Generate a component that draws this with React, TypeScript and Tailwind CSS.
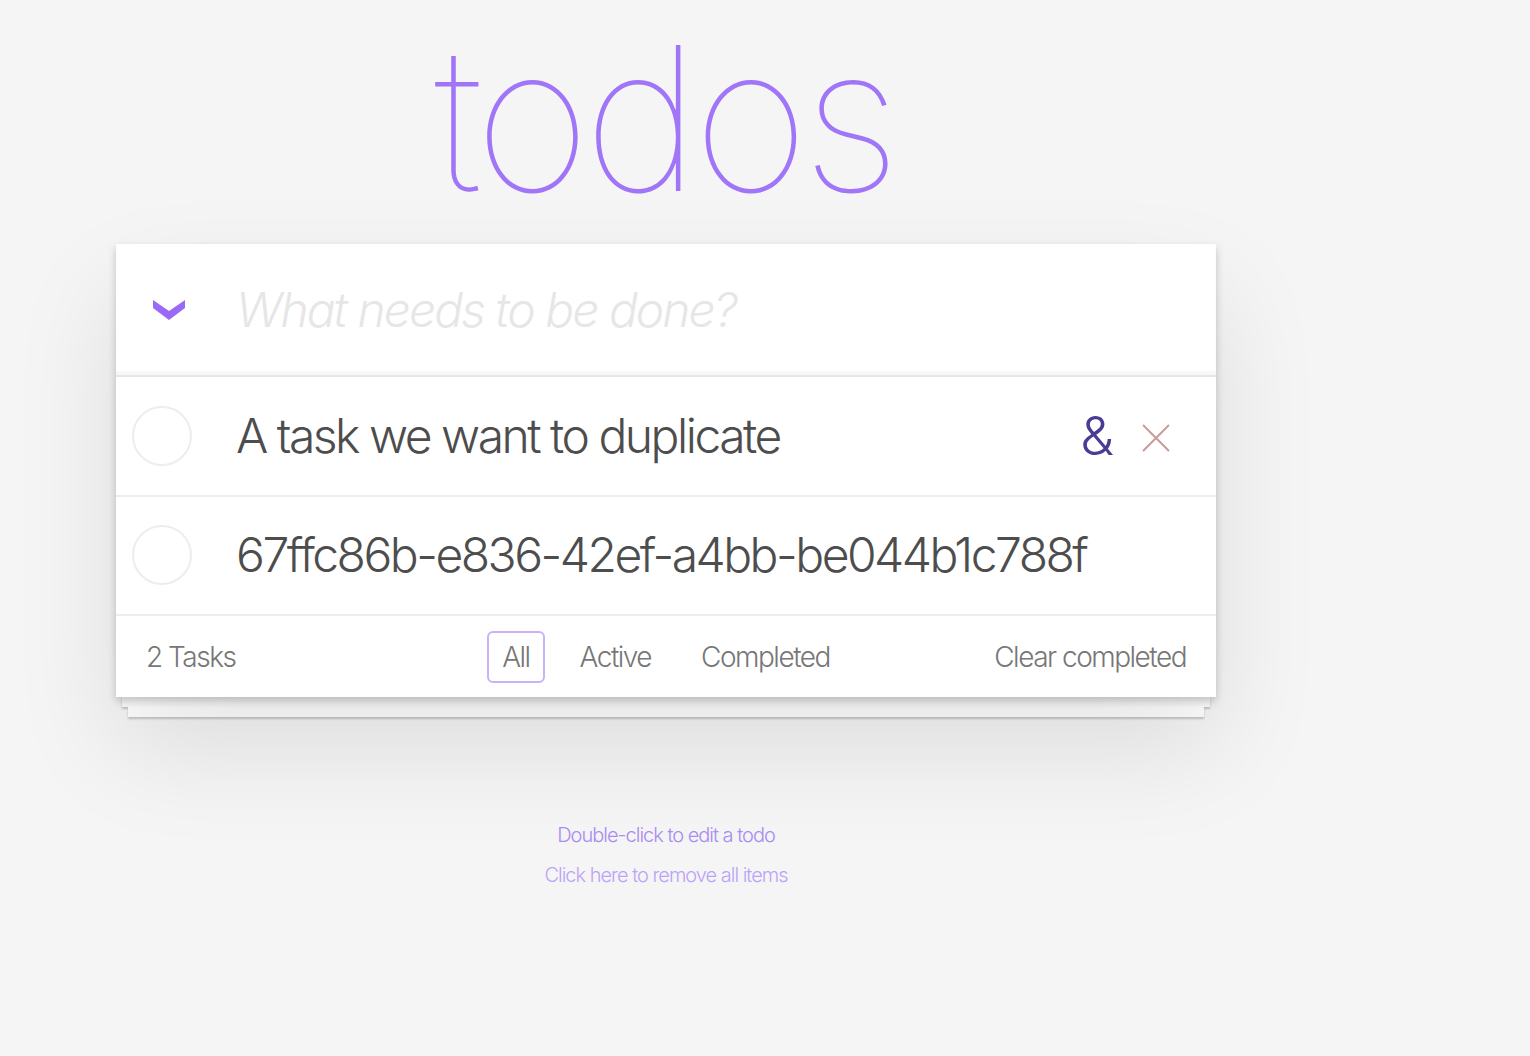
import { useState } from 'react';

type Todo = { id: number; title: string; actions?: boolean };

const todos: Todo[] = [
  { id: 1, title: 'A task we want to duplicate', actions: true },
  { id: 2, title: '67ffc86b-e836-42ef-a4bb-be044b1c788f' },
];

const FONT = "font-['Inter','Liberation_Sans',sans-serif]";

function Chevron() {
  return (
    <svg width="32" height="20" viewBox="0 0 32 20" className="block">
      <polygon points="0,0 16,11 32,0 32,8 16,20 0,8" fill="#9a6af6" />
    </svg>
  );
}

function Cross() {
  return (
    <svg width="28" height="28" viewBox="0 0 28 28" className="block">
      <path d="M1 1 L27 27 M27 1 L1 27" stroke="#cc9a9a" strokeWidth="2" />
    </svg>
  );
}

export default function App() {
  const [filter, setFilter] = useState('All');

  return (
    <div className={`min-h-screen w-full bg-[#f5f5f5] ${FONT}`}>
      <div className="w-[1100px] ml-[116px]">
        <div className="h-[244px] pt-[18px]">
          <h1 className="pr-[4px] text-center text-[200px] leading-[200px] font-thin text-[#a175f7] tracking-[-6.8px]">
            todos
          </h1>
        </div>

        <div className="relative bg-white shadow-[0_4px_8px_rgba(0,0,0,0.2),0_50px_100px_rgba(0,0,0,0.1)]">
          <div className="flex h-[131px] items-center shadow-[inset_0_-4px_2px_rgba(0,0,0,0.03)]">
            <div className="w-[120px] pl-[37px]">
              <Chevron />
            </div>
            <span className="text-[48px] italic font-light text-[#e6e6e6] tracking-[-2px]">What needs to be done?</span>
          </div>

          <ul className="border-t-2 border-[#e6e6e6]">
            {todos.map((t) => (
              <li key={t.id} className="flex h-[119.5px] items-center border-b-2 border-[#ededed]">
                <div className="w-[120px] pl-[16px]">
                  <div className="h-[60px] w-[60px] rounded-full border-2 border-[#ededed]" />
                </div>
                <span className="flex-1 text-[48px] font-light text-[#4d4d4d] tracking-[-2.5px]">{t.title}</span>
                {t.actions && (
                  <div className="flex items-center pr-[46px]">
                    <span className="text-[54px] font-light text-[#4a3b94] leading-none">&amp;</span>
                    <span className="ml-[28px] mt-[4px]">
                      <Cross />
                    </span>
                  </div>
                )}
              </li>
            ))}
          </ul>

          <footer className="grid h-[81px] grid-cols-[1fr_auto_1fr] items-center px-[30px] text-[28px] font-light text-[#777] tracking-[-1.5px]">
            <span>2 Tasks</span>
            <ul className="flex items-center">
              {['All', 'Active', 'Completed'].map((f) => (
                <li key={f} className="mx-[10px]">
                  <button
                    onClick={() => setFilter(f)}
                    className={`rounded-[6px] border-2 px-[13px] py-[3px] ${
                      f === filter ? 'border-[#c9b2f9]' : 'border-transparent'
                    }`}
                  >
                    {f}
                  </button>
                </li>
              ))}
            </ul>
            <span className="text-right">Clear completed</span>
          </footer>
        </div>
        <div className="mx-[6px] h-[10px] bg-white shadow-[0_2px_2px_rgba(0,0,0,0.2)]" />
        <div className="mx-[12px] h-[10px] bg-white shadow-[0_2px_2px_rgba(0,0,0,0.2)]" />

        <div className="mt-[98px] text-center text-[20px] font-light leading-[40px] tracking-[-1px]">
          <p className="text-[#a98cf4]">Double-click to edit a todo</p>
          <p className="text-[#bca3f6]">Click here to remove all items</p>
        </div>
      </div>
    </div>
  );
}
